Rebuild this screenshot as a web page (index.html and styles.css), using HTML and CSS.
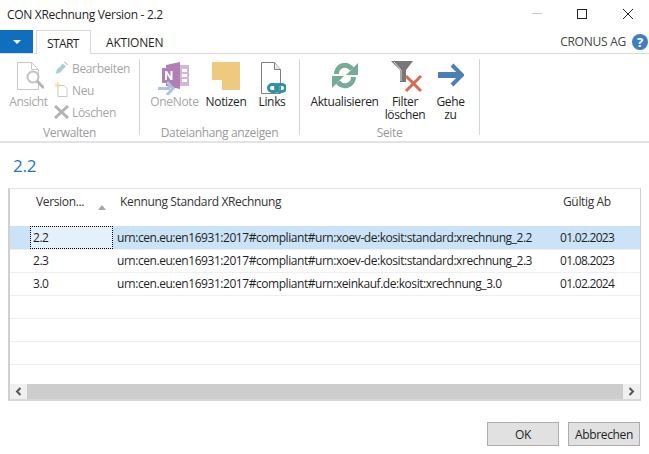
FILE: index.html
```html
<!DOCTYPE html>
<html lang="de">
<head>
    <meta charset="UTF-8">
    <title>CON XRechnung Version - 2.2</title>
    <link rel="stylesheet" href="styles.css">
</head>
<body>

<div class="title-bar">
    <span class="title-text">CON XRechnung Version - 2.2</span>
    <div class="window-controls">
        <svg width="12" height="12" viewBox="0 0 12 12"><path d="M2 5.500h10" stroke="#c8c8c8" fill="none"/></svg>
        <svg width="12" height="12" viewBox="0 0 12 12"><rect x="1.500" y="1.500" width="9" height="9" stroke="#222" fill="none"/></svg>
        <svg width="12" height="12" viewBox="0 0 12 12"><path d="M1 1l10 10M11 1L1 11" stroke="#222" fill="none"/></svg>
    </div>
</div>

<div class="tab-bar">
    <div class="app-button"><span class="app-arrow"></span></div>
    <div class="tab tab-active">START</div>
    <div class="tab">AKTIONEN</div>
    <div class="company">
        <span>CRONUS AG</span>
        <span class="help-icon">?</span>
    </div>
</div>

<div class="ribbon">
    <!-- Verwalten -->
    <div class="ribbon-group group-manage">
        <div class="group-items">
            <div class="big-button button-view disabled">
                <svg class="big-icon" width="30" height="36" viewBox="-3 -2 30 36">
                    <path d="M0.500 1.500h14l7 7v20h-21z" fill="#fff" stroke="#c9c9c9"/>
                    <path d="M14.500 1.500v7h7" fill="none" stroke="#c9c9c9"/>
                    <circle cx="16" cy="16" r="5.500" fill="#fff" stroke="#c2c2c2" stroke-width="2"/>
                    <path d="M20 20l7 7" stroke="#b5b5b5" stroke-width="3"/>
                </svg>
                <span>Ansicht</span>
            </div>
            <div class="small-buttons disabled">
                <div class="small-button">
                    <svg width="14" height="14" viewBox="0 0 14 14"><path d="M1 13l1.500-4.500 6-6 3 3-6 6z" fill="#a9cfd6"/><path d="M9.500 1.500l1-1 3 3-1 1z" fill="#c9c9c9"/></svg>
                    <span>Bearbeiten</span>
                </div>
                <div class="small-button">
                    <svg width="14" height="16" viewBox="0 0 14 16"><path d="M3.500 3.500h6l3 3v8h-9z" fill="#fff" stroke="#c9c9c9"/><path d="M3 0v6M0 3h6M1 1l4 4M5 1L1 5" stroke="#f2d9a0"/></svg>
                    <span>Neu</span>
                </div>
                <div class="small-button">
                    <svg width="15" height="14" viewBox="0 0 15 14"><path d="M1 1l13 12M14 1L1 13" stroke="#b4b4b4" stroke-width="3"/></svg>
                    <span>Löschen</span>
                </div>
            </div>
        </div>
        <div class="group-label">Verwalten</div>
    </div>

    <!-- Dateianhang anzeigen -->
    <div class="ribbon-group group-attach">
        <div class="group-items">
            <div class="big-button button-onenote disabled">
                <svg class="big-icon" width="34" height="36" viewBox="0 -2 34 36">
                    <path d="M8 4l14-3v27l-14-3z" fill="#b27fb5"/>
                    <path d="M22 4h9v21h-9z" fill="#d3b6d5"/>
                    <path d="M24 8h5v3h-5zM24 13h5v3h-5zM24 18h5v3h-5z" fill="#fff"/>
                    <path d="M4 7h12v15h-12z" fill="#b27fb5"/>
                    <path d="M7 19v-9h2l3.500 5.500v-5.500h2v9h-2l-3.500-5.500v5.500z" fill="#fff"/>
                    <path d="M0 27.500h12M9 21l6 6.500-6 6.500" fill="none" stroke="#a9c4e0" stroke-width="3"/>
                </svg>
                <span>OneNote</span>
            </div>
            <div class="big-button button-notes">
                <svg class="big-icon" width="28" height="36" viewBox="0 0 28 36">
                    <path d="M0 3h28v28h-17l-11-11z" fill="#efc97f"/>
                    <path d="M0.500 20.500h10v10z" fill="#fff"/>
                    <path d="M0 20.500h10.500v10.500" fill="none" stroke="#efc97f"/>
                </svg>
                <span>Notizen</span>
            </div>
            <div class="big-button button-links">
                <svg class="big-icon" width="28" height="36" viewBox="-2 -2 28 36">
                    <path d="M1.500 1.500h13l6 7v24h-19z" fill="#fff" stroke="#7f7f7f"/>
                    <path d="M14.500 1.500v7h6" fill="#e8e8e8" stroke="#7f7f7f"/>
                    <rect x="8.500" y="23.500" width="10" height="7" rx="3.500" fill="#fff" stroke="#2f93a8" stroke-width="3"/>
                    <rect x="15.500" y="23.500" width="10" height="7" rx="3.500" fill="none" stroke="#2f93a8" stroke-width="3"/>
                </svg>
                <span>Links</span>
            </div>
        </div>
        <div class="group-label">Dateianhang anzeigen</div>
    </div>

    <!-- Seite -->
    <div class="ribbon-group group-page">
        <div class="group-items">
            <div class="big-button button-refresh">
                <svg class="big-icon" width="28" height="36" viewBox="0 0 28 36">
                    <path d="M5.500 15a8.500 8.500 0 0 1 15.500-5" fill="none" stroke="#76ab98" stroke-width="5"/>
                    <path d="M27 4v12h-12z" fill="#76ab98"/>
                    <path d="M22.500 18a8.500 8.500 0 0 1-15.500 5" fill="none" stroke="#76ab98" stroke-width="5"/>
                    <path d="M1 29v-12h12z" fill="#76ab98"/>
                </svg>
                <span>Aktualisieren</span>
            </div>
            <div class="big-button button-filter">
                <svg class="big-icon" width="34" height="36" viewBox="0 0 34 36">
                    <path d="M3 2h22l-7 9v12h-6v-12z" fill="#777"/>
                    <path d="M6 3l7 8v11" fill="none" stroke="#ddd"/>
                    <path d="M18 32l15-15M18 17l15 15" stroke="#d9694f" stroke-width="3"/>
                </svg>
                <span>Filter löschen</span>
            </div>
            <div class="big-button button-goto">
                <svg class="big-icon" width="26" height="36" viewBox="0 0 26 36">
                    <path d="M0 16h21" stroke="#4a7fb5" stroke-width="6"/>
                    <path d="M14 6l10 10-10 10" fill="none" stroke="#4a7fb5" stroke-width="4"/>
                </svg>
                <span>Gehe zu</span>
            </div>
        </div>
        <div class="group-label">Seite</div>
    </div>
</div>

<h2 class="page-title">2.2</h2>

<div class="list-box">
    <div class="list-scroll">
        <table class="list">
            <colgroup>
                <col class="col-marker">
                <col class="col-version">
                <col class="col-id">
                <col class="col-date">
            </colgroup>
            <thead>
                <tr>
                    <th></th>
                    <th class="version-head">Version...<span class="sort-arrow"></span></th>
                    <th>Kennung Standard XRechnung</th>
                    <th>Gültig Ab</th>
                </tr>
            </thead>
            <tbody>
                <tr class="selected">
                    <td></td>
                    <td class="focus-cell">2.2</td>
                    <td>urn:cen.eu:en16931:2017#compliant#urn:xoev-de:kosit:standard:xrechnung_2.2</td>
                    <td>01.02.2023</td>
                </tr>
                <tr>
                    <td></td>
                    <td>2.3</td>
                    <td>urn:cen.eu:en16931:2017#compliant#urn:xoev-de:kosit:standard:xrechnung_2.3</td>
                    <td>01.08.2023</td>
                </tr>
                <tr>
                    <td></td>
                    <td>3.0</td>
                    <td>urn:cen.eu:en16931:2017#compliant#urn:xeinkauf.de:kosit:xrechnung_3.0</td>
                    <td>01.02.2024</td>
                </tr>
                <tr><td></td><td></td><td></td><td></td></tr>
                <tr><td></td><td></td><td></td><td></td></tr>
                <tr><td></td><td></td><td></td><td></td></tr>
                <tr><td></td><td></td><td></td><td></td></tr>
            </tbody>
        </table>
    </div>
    <div class="scrollbar">
        <div class="scroll-btn">
            <svg width="7" height="9" viewBox="0 0 7 9"><path d="M5.500 1L2 4.500 5.500 8" fill="none" stroke="#555" stroke-width="2"/></svg>
        </div>
        <div class="scroll-thumb"></div>
        <div class="scroll-btn">
            <svg width="7" height="9" viewBox="0 0 7 9"><path d="M1.500 1L5 4.500 1.500 8" fill="none" stroke="#555" stroke-width="2"/></svg>
        </div>
    </div>
</div>

<div class="footer">
    <button type="button">OK</button>
    <button type="button">Abbrechen</button>
</div>

</body>
</html>
```

FILE: styles.css
```css
html, body {
    margin: 0;
    padding: 0;
}
body {
    width: 649px;
    height: 454px;
    overflow: hidden;
    background-color: #ffffff;
    font-family: "Open Sans", "Noto Sans", sans-serif;
    font-size: 12px;
    letter-spacing: -0.35px;
    color: #1f1f1f;
}

/* title bar */
.title-bar {
    height: 28px;
    padding: 0 0 2px 7px;
    display: flex;
    align-items: center;
    justify-content: space-between;
}
.title-text {
    letter-spacing: -0.3px;
}
.window-controls {
    display: flex;
    gap: 34px;
    padding-right: 15px;
}

/* tabs */
.tab-bar {
    height: 23px;
    display: flex;
    border-bottom: 1px solid #d9d9d9;
}
.app-button {
    width: 33px;
    background-color: #106ebe;
    display: flex;
    align-items: center;
    justify-content: center;
}
.app-arrow {
    border-left: 4px solid transparent;
    border-right: 4px solid transparent;
    border-top: 4px solid #ffffff;
}
.tab {
    padding: 0 15px;
    line-height: 25px;
    height: 24px;
    letter-spacing: -0.2px;
}
.tab-active {
    margin-left: 3px;
    width: 55px;
    padding: 0 0 0 10px;
    border: 1px solid #d9d9d9;
    border-bottom: none;
    background-color: #ffffff;
    box-sizing: border-box;
    letter-spacing: -0.6px;
}
.company {
    margin-left: auto;
    display: flex;
    align-items: center;
    gap: 6px;
    padding-right: 1px;
    letter-spacing: -0.25px;
    color: #444444;
}
.help-icon {
    width: 16px;
    height: 16px;
    border-radius: 50%;
    background-color: #3f7fbf;
    color: #ffffff;
    font-weight: bold;
    font-size: 13px;
    line-height: 16px;
    text-align: center;
    letter-spacing: 0;
}

/* ribbon */
.ribbon {
    height: 89px;
    display: flex;
    border-bottom: 2px solid #e3e3e3;
    box-sizing: border-box;
    padding-top: 5px;
}
.ribbon-group {
    display: flex;
    flex-direction: column;
    justify-content: space-between;
    border-right: 1px solid #d4d4d4;
    height: 76px;
    box-sizing: border-box;
}
.group-manage {
    width: 140px;
}
.group-manage .group-items {
    padding-left: 8px;
}
.group-attach {
    width: 160px;
}
.group-attach .group-items {
    padding-left: 9px;
}
.group-page {
    width: 180px;
}
.group-page .group-items {
    padding-left: 11px;
}
.group-items {
    display: flex;
}
.group-label {
    text-align: center;
    color: #9a9a9a;
    line-height: 16px;
    margin-bottom: -6px;
}
.disabled {
    color: #a6a6a6;
}
.big-button {
    display: flex;
    flex-direction: column;
    align-items: center;
    text-align: center;
    line-height: 13px;
}
.button-view {
    width: 41px;
}
.button-onenote {
    width: 51px;
}
.button-notes {
    width: 52px;
}
.button-links {
    width: 40px;
}
.button-refresh {
    width: 67px;
}
.button-filter {
    width: 54px;
}
.button-goto {
    width: 37px;
}
.small-buttons {
    display: flex;
    flex-direction: column;
    gap: 6px;
    margin-left: 5px;
    padding-top: 1px;
}
.small-button {
    display: flex;
    align-items: center;
    height: 16px;
    gap: 3px;
}
.small-button svg {
    width: 15px;
}

/* list */
.page-title {
    margin: 0;
    padding: 13px 0 0 13px;
    height: 32px;
    font-size: 17px;
    font-weight: normal;
    line-height: 20px;
    color: #1b74c8;
    box-sizing: content-box;
    letter-spacing: -0.2px;
}
.list-box {
    margin: 0 8px;
    height: 213px;
    box-sizing: border-box;
    border: 1px solid #e4e4e4;
    border-left: 2px solid #d0d0d0;
    border-right: 1px solid #d0d0d0;
    border-bottom: 2px solid #d8d8d8;
    display: flex;
    flex-direction: column;
}
.list-scroll {
    height: 195px;
    overflow: hidden;
}
.list {
    width: 630px;
    table-layout: fixed;
    border-collapse: collapse;
}
.col-marker {
    width: 20px;
}
.col-version {
    width: 83px;
}
.col-id {
    width: 443px;
}
.list th {
    height: 37px;
    padding: 3px 0 0 7px;
    font-weight: normal;
    text-align: left;
    vertical-align: top;
    line-height: 20px;
    color: #333333;
    box-sizing: border-box;
}
.list .version-head {
    position: relative;
    padding-left: 6px;
}
.sort-arrow {
    position: absolute;
    left: 68px;
    top: 16px;
    border-left: 4px solid transparent;
    border-right: 4px solid transparent;
    border-bottom: 5px solid #a8a8a8;
}
.list td {
    height: 23px;
    padding: 0 0 0 4px;
    border-bottom: 1px solid #efefef;
    box-sizing: border-box;
    white-space: nowrap;
    overflow: hidden;
    letter-spacing: -0.45px;
}
.selected td {
    background-color: #cae3f6;
}
.list .focus-cell {
    background-color: #e4f1fa;
    outline: 1px dotted #000000;
    outline-offset: -1px;
}
.list td:nth-child(2) {
    padding-left: 3px;
}
.list td:nth-child(4) {
    padding-left: 4px;
    letter-spacing: -0.7px;
}

/* scrollbar */
.scrollbar {
    height: 15px;
    display: flex;
}
.scroll-btn {
    width: 17px;
    background-color: #f0f0f0;
    display: flex;
    align-items: center;
    justify-content: center;
}
.scroll-thumb {
    flex: 1;
    background-color: #cdcdcd;
}

/* buttons */
.footer {
    display: flex;
    justify-content: flex-end;
    gap: 9px;
    padding: 21px 9px 0 0;
}
.footer button {
    width: 72px;
    height: 24px;
    padding: 0;
    background-color: #e1e1e1;
    border: 1px solid #adadad;
    font: inherit;
    letter-spacing: -0.35px;
    color: #1f1f1f;
}
```
